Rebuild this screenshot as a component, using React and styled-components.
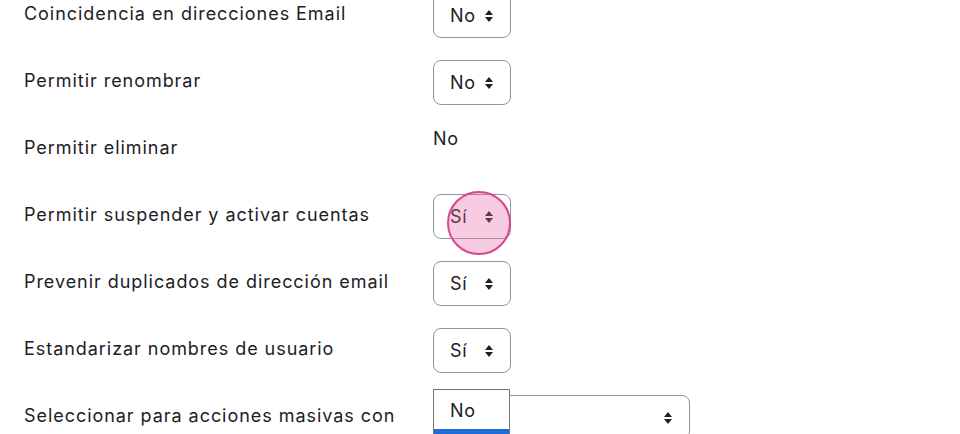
import React from "react";
import styled, { createGlobalStyle } from "styled-components";

const GlobalStyle = createGlobalStyle`
  html, body {
    margin: 0;
    padding: 0;
    background: #fff;
    overflow: hidden;
  }
  body {
    font-family: "Inter", "Open Sans", sans-serif;
    color: #1d2125;
  }
`;

const settings = [
  { label: "Coincidencia en direcciones Email", value: "No" },
  { label: "Permitir renombrar", value: "No" },
  { label: "Permitir eliminar", value: "No", type: "static" },
  { label: "Permitir suspender y activar cuentas", value: "Sí", marked: true },
  { label: "Prevenir duplicados de dirección email", value: "Sí" },
  { label: "Estandarizar nombres de usuario", value: "Sí" },
  { label: "Seleccionar para acciones masivas con", value: "", wide: true, open: true },
];

const Page = styled.div`
  margin-top: -7px;
  padding-left: 24px;
  display: flex;
  flex-direction: column;
  gap: 22px;
`;

const Row = styled.div`
  display: grid;
  grid-template-columns: 409px 1fr;
  align-items: ${(p) => (p.$static ? "start" : "center")};
  min-height: 45px;
`;

const Label = styled.div`
  font-size: 18px;
  line-height: 41px;
  padding-bottom: 4px;
  letter-spacing: 0.95px;
  color: #1d2125;
`;

const StaticValue = styled.div`
  font-size: 18px;
  line-height: 24px;
  letter-spacing: 0.75px;
  color: #1d2125;
`;

const Control = styled.div`
  position: relative;
  width: ${(p) => (p.$wide ? "257px" : "78px")};
`;

const SelectBox = styled.div`
  box-sizing: border-box;
  height: 45px;
  width: 100%;
  border: 1px solid #8f959e;
  border-radius: 8px;
  background: #fff;
  display: flex;
  align-items: center;
  justify-content: space-between;
  padding: 0 16px;
  font-size: 18px;
  letter-spacing: 0.6px;
  color: #1d2125;
`;

const Arrows = styled.svg`
  width: 10px;
  height: 14px;
  flex: none;
`;

const Highlight = styled.span`
  position: absolute;
  left: 14px;
  top: -3px;
  width: 64px;
  height: 64px;
  border-radius: 50%;
  background: rgba(232, 96, 160, 0.32);
  border: 2px solid #d9458e;
  box-sizing: border-box;
  pointer-events: none;
`;

const Listbox = styled.div`
  position: absolute;
  left: 0;
  top: -6px;
  width: 77px;
  box-sizing: border-box;
  border: 1px solid #767676;
  border-bottom: none;
  background: #fff;
  z-index: 2;
`;

const Option = styled.div`
  font-size: 18px;
  letter-spacing: 0.6px;
  height: ${(p) => (p.$active ? "20px" : "39px")};
  line-height: 41px;
  padding-left: 16px;
  color: ${(p) => (p.$active ? "#fff" : "#1d2125")};
  background: ${(p) => (p.$active ? "#1f6bd8" : "#fff")};
`;

const ArrowIcon = () => (
  <Arrows viewBox="0 0 10 14">
    <path d="M5 1 L9 6 L1 6 Z M5 13 L9 8 L1 8 Z" fill="#1d2125" />
  </Arrows>
);

export default function App() {
  return (
    <>
      <GlobalStyle />
      <Page>
        {settings.map((s) => (
          <Row key={s.label} $static={s.type === "static"}>
            <Label>{s.label}</Label>
            {s.type === "static" ? (
              <StaticValue>{s.value}</StaticValue>
            ) : (
              <Control $wide={s.wide}>
                <SelectBox>
                  <span>{s.value}</span>
                  <ArrowIcon />
                </SelectBox>
                {s.marked && <Highlight />}
                {s.open && (
                  <Listbox>
                    <Option>No</Option>
                    <Option $active />
                  </Listbox>
                )}
              </Control>
            )}
          </Row>
        ))}
      </Page>
    </>
  );
}
